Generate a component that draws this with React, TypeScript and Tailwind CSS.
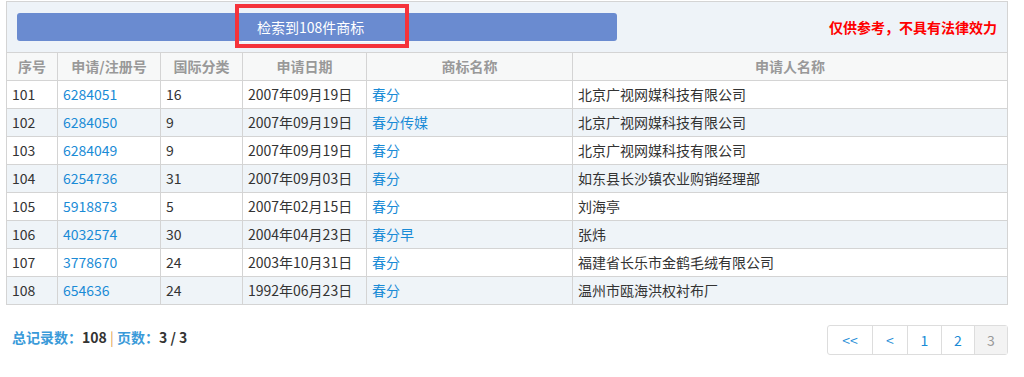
import React from "react";

const rows = [
  ["101", "6284051", "16", "2007年09月19日", "春分", "北京广视网媒科技有限公司"],
  ["102", "6284050", "9", "2007年09月19日", "春分传媒", "北京广视网媒科技有限公司"],
  ["103", "6284049", "9", "2007年09月19日", "春分", "北京广视网媒科技有限公司"],
  ["104", "6254736", "31", "2007年09月03日", "春分", "如东县长沙镇农业购销经理部"],
  ["105", "5918873", "5", "2007年02月15日", "春分", "刘海亭"],
  ["106", "4032574", "30", "2004年04月23日", "春分早", "张炜"],
  ["107", "3778670", "24", "2003年10月31日", "春分", "福建省长乐市金鹤毛绒有限公司"],
  ["108", "654636", "24", "1992年06月23日", "春分", "温州市瓯海洪权衬布厂"],
];

const font = { fontFamily: '"Microsoft YaHei", "Noto Sans CJK SC", sans-serif' };

export default function App() {
  return (
    <div className="w-[1024px] h-[377px] bg-white text-[14px] text-[#333]" style={font}>
      <div className="pt-px pl-[6px] w-[1008px]">
        <div className="border border-[#d4d4d4] border-b-0 bg-[#eef3f8] h-[51px] flex items-center relative">
          <div className="ml-[10px] w-[600px] h-[28px] bg-[#6a8bd0] rounded-[3px] flex items-center">
            <span className="ml-[240px] text-white text-[14px]">检索到108件商标</span>
          </div>
          <div className="absolute left-[228px] top-[2px] w-[174px] h-[44px] border-[4px] border-[#f5333b]">
            <div className="absolute left-[3px] right-[3px] top-[33px] h-px bg-white"></div>
          </div>
          <span className="ml-auto mr-[10px] text-[#ff0000] font-bold text-[14px]">仅供参考，不具有法律效力</span>
        </div>
        <table className="w-[1002px] border-collapse table-fixed">
          <colgroup>
            <col className="w-[51px]" />
            <col className="w-[103px]" />
            <col className="w-[82px]" />
            <col className="w-[124px]" />
            <col className="w-[206px]" />
            <col />
          </colgroup>
          <thead>
            <tr className="h-[28px] bg-[#f7f8f8]">
              {["序号", "申请/注册号", "国际分类", "申请日期", "商标名称", "申请人名称"].map((h) => (
                <th key={h} className="border border-[#d4d4d4] text-center text-[#999] font-bold text-[14px] p-0">
                  {h}
                </th>
              ))}
            </tr>
          </thead>
          <tbody>
            {rows.map((r, i) => (
              <tr key={r[0]} className={`h-[28px] ${i % 2 === 1 ? "bg-[#eff4f8]" : "bg-white"}`}>
                <td className="border border-[#d4d4d4] pl-[5px] p-0">{r[0]}</td>
                <td className="border border-[#d4d4d4] pl-[5px] p-0 text-[#1a8bd6]">{r[1]}</td>
                <td className="border border-[#d4d4d4] pl-[5px] p-0">{r[2]}</td>
                <td className="border border-[#d4d4d4] pl-[5px] p-0">{r[3]}</td>
                <td className="border border-[#d4d4d4] pl-[5px] p-0 text-[#1a8bd6]">{r[4]}</td>
                <td className="border border-[#d4d4d4] pl-[5px] p-0">{r[5]}</td>
              </tr>
            ))}
          </tbody>
        </table>
        <div className="flex items-start mt-[20px]">
          <div className="ml-[6px] mt-[2px] text-[14px] font-bold leading-[20px]">
            <span className="text-[#3a9ad9]">总记录数：</span>
            <span className="text-[#333]">108 </span>
            <span className="text-[#e0a050] font-normal">|</span>
            <span className="text-[#3a9ad9]"> 页数：</span>
            <span className="text-[#333]">3 / 3</span>
          </div>
          <div className="ml-auto flex h-[30px] border border-[#ddd] rounded-[3px] text-[14px] text-[#1a8bd6]">
            <div className="w-[45px] flex items-center justify-center border-r border-[#ddd]">&lt;&lt;</div>
            <div className="w-[35px] flex items-center justify-center border-r border-[#ddd]">&lt;</div>
            <div className="w-[34px] flex items-center justify-center border-r border-[#ddd]">1</div>
            <div className="w-[33px] flex items-center justify-center border-r border-[#ddd]">2</div>
            <div className="w-[32px] flex items-center justify-center bg-[#f3f3f3] text-[#999]">3</div>
          </div>
        </div>
      </div>
    </div>
  );
}
